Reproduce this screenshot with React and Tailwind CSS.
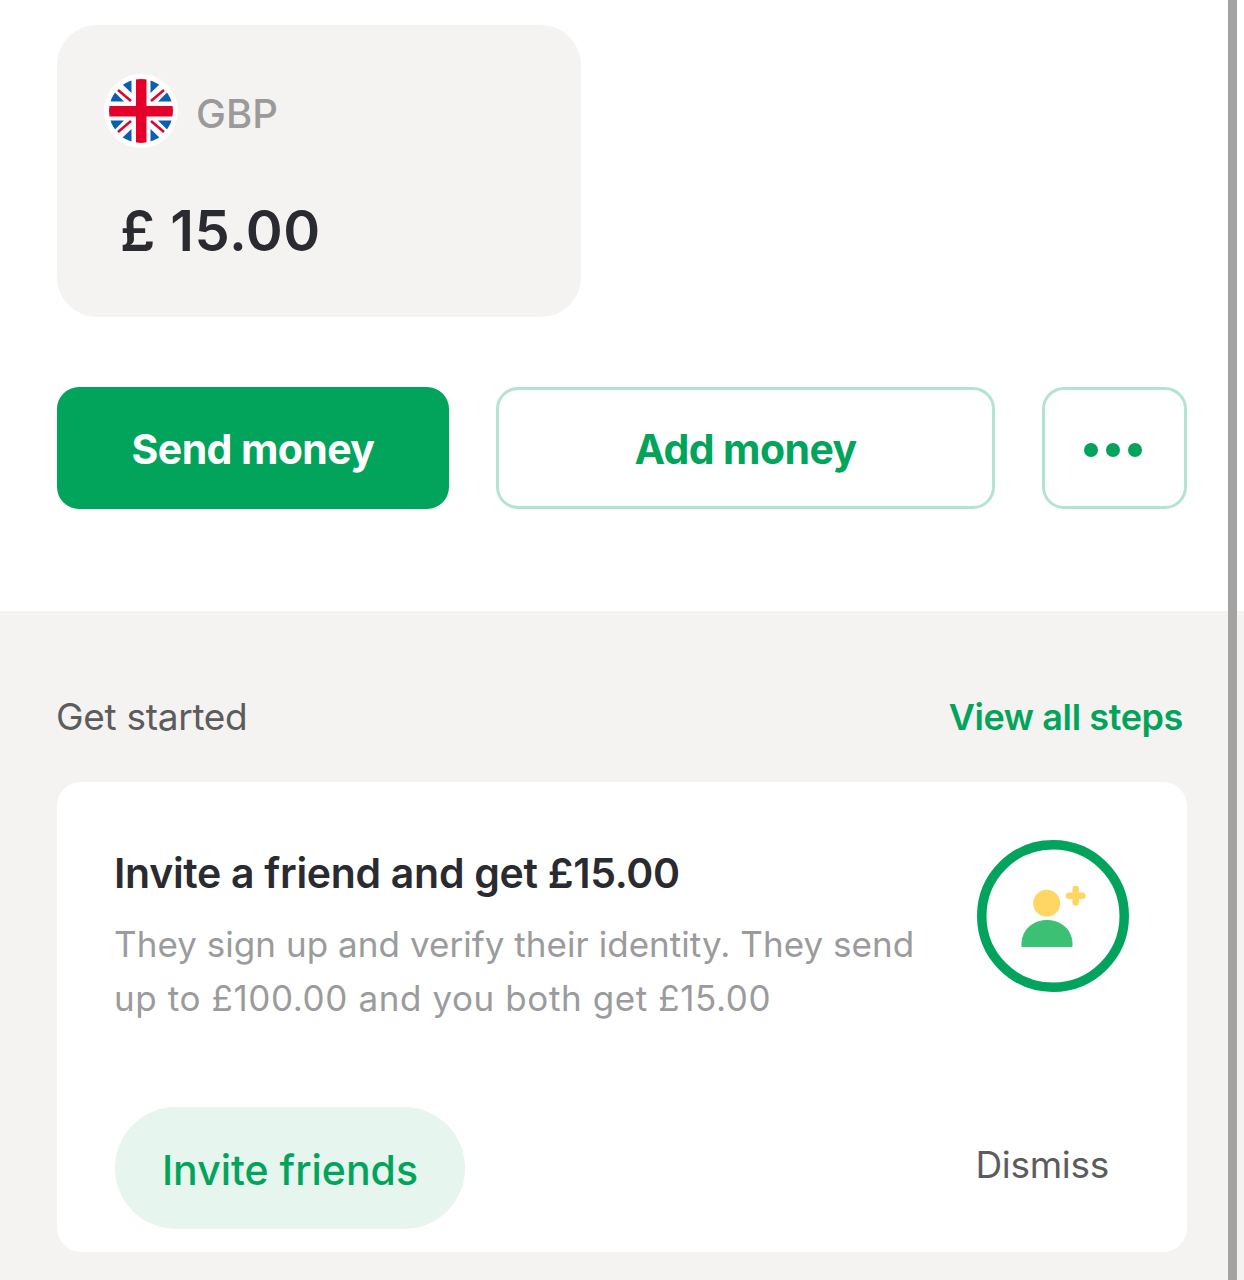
const FONT = { fontFamily: 'Inter, sans-serif' };

function FlagQuadrant({ transform }) {
  return (
    <g transform={transform}>
      <path d="M27.5 3 L27.5 19 L18 10 Z" fill="#0a5fb4" />
      <path d="M4 27.5 L20 27.5 L11 18.5 Z" fill="#0a5fb4" />
      <path d="M14 16 L27 27" stroke="#e4002b" strokeWidth="2.5" />
    </g>
  );
}

function UkFlag() {
  return (
    <svg width="74" height="74" viewBox="0 0 74 74" className="shrink-0">
      <defs>
        <clipPath id="flag-clip"><circle cx="37" cy="37" r="32" /></clipPath>
      </defs>
      <circle cx="37" cy="37" r="37" fill="#ffffff" />
      <g clipPath="url(#flag-clip)">
        <FlagQuadrant />
        <FlagQuadrant transform="translate(74 0) scale(-1 1)" />
        <FlagQuadrant transform="translate(0 74) scale(1 -1)" />
        <FlagQuadrant transform="translate(74 74) scale(-1 -1)" />
        <rect x="32" y="4" width="10.5" height="66" fill="#e4002b" />
        <rect x="4" y="32" width="66" height="10.5" fill="#e4002b" />
      </g>
    </svg>
  );
}

function InviteIcon() {
  return (
    <svg width="152" height="152" viewBox="0 0 152 152" className="shrink-0">
      <circle cx="76" cy="76" r="71.25" fill="#ffffff" stroke="#02a45c" strokeWidth="9.5" />
      <circle cx="69.7" cy="63.3" r="13.5" fill="#ffd664" />
      <path d="M45 106.5 C44 90 56 80.5 70 80.5 C84 80.5 96 90 95 106.5 Z" fill="#3cc174" stroke="#3cc174" strokeWidth="1" strokeLinejoin="round" />
      <path d="M98.7 49 V62.4 M92 55.7 H105.4" stroke="#ffd664" strokeWidth="6.5" strokeLinecap="round" />
    </svg>
  );
}

export default function App() {
  return (
    <div className="relative w-[1244px] h-[1280px] overflow-hidden bg-white" style={FONT}>
      <div className="h-[611px] pt-[25px] px-[57px]">
        <div className="w-[524px] h-[292px] rounded-[40px] bg-[#f4f3f1] pt-[49px] pl-[47px]">
          <div className="flex items-center gap-[18px]">
            <UkFlag />
            <span className="mt-[6px] text-[40px] font-medium leading-none text-[#9a9a9a]">GBP</span>
          </div>
          <p className="mt-[53px] ml-[16px] text-[56px] font-semibold leading-[60px] text-[#2a2b30] tracking-[0.5px] whitespace-nowrap">£ 15.00</p>
        </div>
        <div className="mt-[70px] flex gap-[47px]">
          <button className="w-[392px] h-[122px] pt-1 rounded-[22px] bg-[#02a45c] text-white text-[41px] font-bold tracking-[-0.6px]">Send money</button>
          <button className="w-[499px] h-[122px] pt-1 rounded-[22px] border-[3px] border-[#b4e3d0] text-[#02a45c] text-[41px] font-bold tracking-[-0.6px]">Add money</button>
          <button className="w-[145px] h-[122px] pt-[3px] pr-[3px] rounded-[22px] border-[3px] border-[#b4e3d0] flex items-center justify-center gap-[8px]">
            <span className="w-[14px] h-[14px] rounded-full bg-[#02a45c]" />
            <span className="w-[14px] h-[14px] rounded-full bg-[#02a45c]" />
            <span className="w-[14px] h-[14px] rounded-full bg-[#02a45c]" />
          </button>
        </div>
      </div>

      <div className="h-[669px] bg-[#f4f3f1] px-[57px] pt-[83px]">
        <div className="flex items-center justify-between h-[46px]">
          <span className="-ml-px text-[37px] text-[#5c5c5e] tracking-[-0.3px]">Get started</span>
          <span className="mr-[4px] text-[36px] font-semibold text-[#02a45c] tracking-[-0.4px]">View all steps</span>
        </div>
        <div className="mt-[42px] h-[470px] rounded-[24px] bg-white pt-[66px] pl-[57px] pr-[58px]">
          <div className="flex justify-between -mt-[8px]">
            <div className="pt-[8px]">
              <h2 className="text-[41px] font-semibold leading-[50px] text-[#2a2b30] tracking-[-0.3px]">Invite a friend and get £15.00</h2>
              <p className="mt-[19px] text-[35px] leading-[54px] text-[#9a9b9d] whitespace-nowrap">
                <span className="tracking-[0.05px]">They sign up and verify their identity. They send</span>
                <br />
                <span className="tracking-[0.6px]">up to £100.00 and you both get £15.00</span>
              </p>
            </div>
            <InviteIcon />
          </div>
          <div className="mt-[82px] flex items-center justify-between">
            <button className="w-[350px] h-[122px] pt-[6px] ml-px rounded-full bg-[#e6f5ee] text-[#02a45c] text-[41px] font-medium">Invite friends</button>
            <span className="mr-[20px] -mt-[6px] text-[37px] text-[#5c5c5e] tracking-[-0.3px]">Dismiss</span>
          </div>
        </div>
      </div>

      <div className="absolute top-0 right-[7px] w-[9px] h-full bg-[#a3a3a3]" />
    </div>
  );
}
